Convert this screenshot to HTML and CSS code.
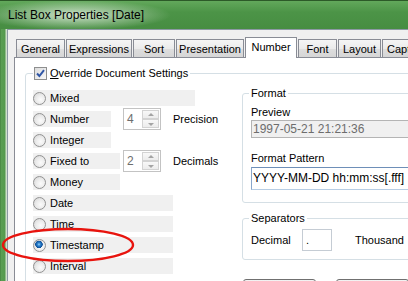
FILE: index.html
```html
<!doctype html>
<html>
<head>
<meta charset="utf-8">
<title>List Box Properties [Date]</title>
<link rel="stylesheet" href="styles.css">
</head>
<body>
<div class="window">
  <div class="titlebar">List Box Properties [Date]</div>
  <div class="client">
    <ul class="tabs">
      <li class="tab t-general">General</li>
      <li class="tab t-expr">Expressions</li>
      <li class="tab t-sort">Sort</li>
      <li class="tab t-pres">Presentation</li>
      <li class="tab t-number active">Number</li>
      <li class="tab t-font">Font</li>
      <li class="tab t-layout">Layout</li>
      <li class="tab t-caption">Caption</li>
    </ul>
    <div class="panel">
      <fieldset class="override">
        <legend>
          <span class="check">
            <svg width="9" height="9" viewBox="0 0 9 9"><path d="M1 4.5 L3.4 7 L8 1.2" fill="none" stroke="#2f56a6" stroke-width="2"/></svg>
          </span><u>O</u>verride Document Settings
        </legend>
        <div class="cols">
          <div class="types">
            <div class="row">
              <label class="opt w-mixed"><span class="radio"></span>Mixed</label>
            </div>
            <div class="row">
              <div class="cell"><label class="opt w-short"><span class="radio"></span>Number</label></div>
              <div class="spin"><span class="spin-val">4</span><span class="spin-btns"><span class="up"></span><span class="down"></span></span></div>
              <span class="side">Precision</span>
            </div>
            <div class="row">
              <label class="opt w-short"><span class="radio"></span>Integer</label>
            </div>
            <div class="row">
              <div class="cell"><label class="opt w-mid"><span class="radio"></span>Fixed to</label></div>
              <div class="spin"><span class="spin-val">2</span><span class="spin-btns"><span class="up"></span><span class="down"></span></span></div>
              <span class="side">Decimals</span>
            </div>
            <div class="row">
              <label class="opt w-mid"><span class="radio"></span>Money</label>
            </div>
            <div class="row">
              <label class="opt w-long"><span class="radio"></span>Date</label>
            </div>
            <div class="row">
              <label class="opt w-long"><span class="radio"></span>Time</label>
            </div>
            <div class="row">
              <label class="opt w-long"><span class="radio on"></span>Timestamp</label>
            </div>
            <div class="row">
              <label class="opt w-long"><span class="radio"></span>Interval</label>
            </div>
          </div>
          <div class="fmt">
            <fieldset class="group format">
              <legend>Format</legend>
              <div class="caption">Preview</div>
              <div class="field preview">1997-05-21 21:21:36</div>
              <div class="caption gap">Format Pattern</div>
              <div class="field pattern">YYYY-MM-DD hh:mm:ss[.fff]</div>
            </fieldset>
            <fieldset class="group seps">
              <legend>Separators</legend>
              <div class="sep-row">
                <span class="sep-label">Decimal</span>
                <span class="field small">.</span>
                <span>Thousand</span>
              </div>
            </fieldset>
            <div class="buttons">
              <button class="btn">ISO</button>
              <button class="btn">System</button>
            </div>
          </div>
        </div>
      </fieldset>
    </div>
  </div>
  <svg class="mark" width="408" height="281" viewBox="0 0 408 281">
    <ellipse cx="68" cy="245" rx="65" ry="16" fill="none" stroke="#e8140e" stroke-width="2.4"/>
  </svg>
</div>
</body>
</html>
```

FILE: styles.css
```css
* {
    box-sizing: border-box;
}
html, body {
    margin: 0;
    overflow: hidden;
}
body {
    width: 408px;
    height: 281px;
    font-family: "Liberation Sans", Arial, sans-serif;
    font-size: 11px;
    color: #000;
}

.window {
    position: relative;
    height: 281px;
    border-top: 1px solid #2c5a28;
    background: linear-gradient(90deg, #3d7a38 0, #5b9f54 1px, #549a4d 5px, #cfe0cc 6px, #cfe0cc 7px);
}
.titlebar {
    height: 28px;
    padding-left: 8px;
    font-size: 12px;
    line-height: 28px;
    background:
        radial-gradient(ellipse 95px 15px at 76px 14px, rgba(230, 240, 228, 0.85), rgba(230, 240, 228, 0) 100%),
        linear-gradient(#62a85b, #4c9447 40%, #478d42);
}

.client {
    margin-left: 7px;
    height: 252px;
    background: #f0f0f0;
    border-left: 1px solid #8c99a4;
    border-top: 1px solid #8c99a4;
}

.tabs {
    display: flex;
    align-items: flex-end;
    height: 20px;
    margin: 7px 0 0 8px;
    padding: 0;
    list-style: none;
    white-space: nowrap;
}
.tab {
    flex: none;
    height: 18px;
    margin-right: 1px;
    border: 1px solid #898c95;
    border-bottom: 0;
    background: linear-gradient(#f5f5f5, #ebebeb 50%, #dedede 51%, #d6d6d6);
    text-align: center;
    line-height: 18px;
    overflow: hidden;
}
.tab.active {
    position: relative;
    z-index: 1;
    height: 21px;
    margin-bottom: -1px;
    background: #fff;
}
.t-general { width: 49px; }
.t-expr { width: 66px; }
.t-sort { width: 42px; }
.t-pres { width: 68px; }
.t-number { width: 52px; }
.t-font { width: 39px; }
.t-layout { width: 43px; }
.t-caption { width: 50px; text-align: left; padding-left: 4px; }

.panel {
    width: 440px;
    height: 240px;
    margin-left: 6px;
    border: 1px solid #898c95;
    background: #fff;
}

.override {
    width: 600px;
    height: 400px;
    min-width: 0;
    margin: 8px 0 0 10px;
    padding: 6px 0 0 7px;
    border: 1px solid #d5dfe5;
    border-radius: 3px;
}
.override > legend {
    display: flex;
    align-items: center;
    height: 14px;
    padding: 0 2px 0 1px;
    line-height: 14px;
}
.check {
    display: flex;
    align-items: center;
    justify-content: center;
    width: 13px;
    height: 13px;
    margin-right: 3px;
    border: 1px solid #8e8f8f;
    background: linear-gradient(135deg, #dcdcdc, #f8f8f8);
}

.cols {
    display: flex;
    align-items: flex-start;
}
.types {
    flex: none;
    width: 209px;
    margin-top: 4px;
}
.row {
    display: flex;
    align-items: center;
    height: 16px;
    margin-bottom: 5px;
}
.cell {
    flex: none;
    width: 90px;
}
.opt {
    display: flex;
    align-items: center;
    height: 16px;
    background: #f0f0f0;
}
.w-mixed { width: 162px; }
.w-short { width: 78px; }
.w-mid { width: 87px; }
.w-long { width: 140px; }

.radio {
    flex: none;
    width: 13px;
    height: 13px;
    margin-right: 4px;
    border: 1px solid #929292;
    border-radius: 50%;
    background: radial-gradient(circle at 60% 60%, #fbfbfb 0, #ececec 45%, #d2d2d2 100%);
}
.radio.on {
    background:
        radial-gradient(circle at 45% 40%, #9fd6fb 0, #2f86d2 1.5px, #0d4f98 3.5px, rgba(13, 79, 152, 0) 4px),
        radial-gradient(circle at 60% 60%, #fbfbfb 0, #ececec 45%, #d2d2d2 100%);
}

.spin {
    flex: none;
    display: flex;
    width: 38px;
    height: 22px;
    border: 1px solid #c3c3c3;
    background: #fff;
}
.spin-val {
    flex: 1;
    padding-left: 3px;
    color: #6d6d6d;
    font-size: 12px;
    line-height: 20px;
}
.spin-btns {
    display: flex;
    flex-direction: column;
    justify-content: space-between;
    width: 18px;
    padding: 1px 1px 1px 0;
}
.spin-btns span {
    position: relative;
    height: 9px;
    border: 1px solid #d3d3d3;
    background: linear-gradient(#f8f8f8, #ececec);
}
.spin-btns span::after {
    content: "";
    position: absolute;
    left: 5px;
    top: 2px;
    border-left: 3px solid transparent;
    border-right: 3px solid transparent;
}
.spin-btns .up::after {
    border-bottom: 3px solid #a4a4a4;
}
.spin-btns .down::after {
    top: 3px;
    border-top: 3px solid #a4a4a4;
}
.side {
    margin-left: 12px;
}

.fmt {
    flex: none;
    width: 300px;
}
.group {
    min-width: 0;
    margin: 0;
    padding: 0 0 12px 8px;
    border: 1px solid #d5dfe5;
    border-radius: 3px;
}
.group > legend {
    margin-left: -2px;
    padding: 0 2px;
    line-height: 14px;
}
.caption {
    margin-top: 5px;
    line-height: 14px;
}
.caption.gap {
    margin-top: 13px;
}
.field {
    display: block;
    padding-left: 1px;
    border: 1px solid #abadb3;
    background: #fff;
    white-space: nowrap;
}
.preview {
    height: 18px;
    margin-top: 1px;
    border-color: #b4b4b4;
    background: #f0f0f0;
    color: #6d6d6d;
    font-size: 12px;
    line-height: 16px;
}
.pattern {
    height: 23px;
    margin-top: 2px;
    border-color: #6e8fb8 #b7cde4 #b7cde4 #89a7cc;
    font-size: 12px;
    line-height: 21px;
}

.seps {
    margin-top: 8px;
    padding-bottom: 8px;
}
.sep-row {
    display: flex;
    align-items: center;
    margin-top: 4px;
}
.sep-label {
    width: 51px;
}
.field.small {
    width: 30px;
    height: 22px;
    margin-right: 23px;
    padding-left: 3px;
    border-color: #c5ccd4;
    line-height: 20px;
}

.buttons {
    display: flex;
    gap: 20px;
    margin: 19px 0 0 1px;
}
.btn {
    width: 73px;
    height: 26px;
    padding: 12px 0 0;
    border: 1px solid #707070;
    border-radius: 3px;
    background: linear-gradient(#f2f2f2, #ebebeb 50%, #dddddd 51%, #cfcfcf);
    font: inherit;
}

.mark {
    position: absolute;
    left: 0;
    top: -1px;
    pointer-events: none;
}
```
